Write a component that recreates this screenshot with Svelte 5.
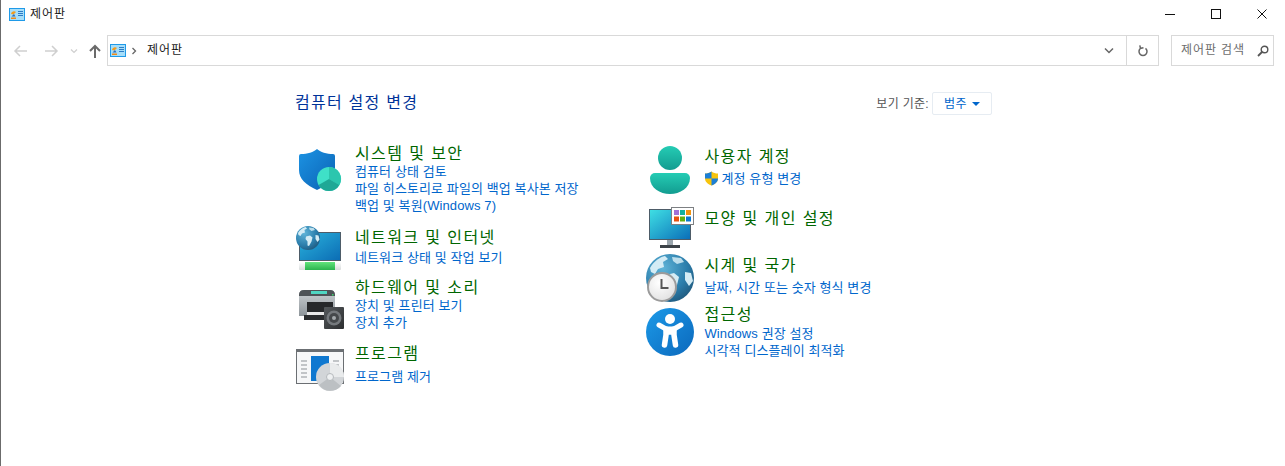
<script>
  const left = [
    { icon: 'shield', title: '시스템 및 보안', h: 84, iconTop: 4, linkGap: 0, links: ['컴퓨터 상태 검토', '파일 히스토리로 파일의 백업 복사본 저장', '백업 및 복원(Windows 7)'] },
    { icon: 'network', title: '네트워크 및 인터넷', h: 50, iconTop: -2, linkGap: 2, links: ['네트워크 상태 및 작업 보기'] },
    { icon: 'printer', title: '하드웨어 및 소리', h: 66, iconTop: 8, linkGap: 0, links: ['장치 및 프린터 보기', '장치 추가'] },
    { icon: 'program', title: '프로그램', h: 60, iconTop: 3, linkGap: 5, links: ['프로그램 제거'] }
  ];
  const right = [
    { icon: 'person', title: '사용자 계정', h: 62, iconTop: 0, linkGap: 4, shield: true, links: ['계정 유형 변경'] },
    { icon: 'theme', title: '모양 및 개인 설정', h: 47, iconTop: -4, linkGap: 0, links: [] },
    { icon: 'clock', title: '시계 및 국가', h: 49, iconTop: -1, linkGap: 4, links: ['날짜, 시간 또는 숫자 형식 변경'] },
    { icon: 'access', title: '접근성', h: 60, iconTop: 4, linkGap: 1, links: ['Windows 권장 설정', '시각적 디스플레이 최적화'] }
  ];
  const columns = [
    { name: 'left', items: left },
    { name: 'right', items: right }
  ];
</script>

{#snippet cpIcon()}
  <svg class="cp" width="16" height="13" viewBox="0 0 16 13">
    <rect x="0.5" y="0.5" width="15" height="12" fill="#a6def9" stroke="#1f9ae8" />
    <path d="M2 6a3 3 0 0 1 5-2L4.500 6.500z" fill="#f29b1d" />
    <path d="M2.500 8.500l2.500-2.500 1.500 2.500z" fill="#2a6fc0" />
    <path d="M9 3.500h5M9 5.500h5M9 7.500h5" stroke="#2d7cc6" />
    <rect x="2" y="9.500" width="5" height="1.500" fill="#ef8a17" />
  </svg>
{/snippet}

{#snippet globeArt(cx, cy, r, id)}
  <defs>
    <radialGradient {id} cx="0.35" cy="0.3" r="0.85">
      <stop offset="0" stop-color="#5fb4d8" />
      <stop offset="0.6" stop-color="#2b7dab" />
      <stop offset="1" stop-color="#1d4f70" />
    </radialGradient>
  </defs>
  <circle {cx} {cy} {r} fill="url(#{id})" />
  <g fill="#d4ecf5" transform="translate({cx} {cy}) scale({r / 24})">
    <path d="M-20-10c4-7 10-11 15-12l3 3-5 3 1 5-6 2-3 5-4-2z" />
    <path d="M2-21l9 1 3 4-7 2-4-3z" opacity="0.85" />
    <path d="M-4-3l8-2 5 4-2 8-5 9-3-1 0-8-4-5z" />
    <path d="M15-6l6 1 2 8-4 5-4-6z" />
  </g>
{/snippet}

{#snippet icon(name)}
  <svg class="ic" width="48" height="48" viewBox="0 0 48 48">
    {#if name === 'shield'}
      <defs>
        <linearGradient id="sh" x1="0" y1="0" x2="1" y2="1"><stop offset="0" stop-color="#1c93e3" /><stop offset="1" stop-color="#0b62b4" /></linearGradient>
      </defs>
      <path d="M21 2c3 3 10 5 16 5q2 0 2 2v14c0 9-7 15-18 20C10 38 3 32 3 23V9q0-2 2-2c6 0 13-2 16-5z" fill="url(#sh)" />
      <circle cx="33" cy="32" r="12" fill="#3fe0c8" />
      <path d="M33 32V20a12 12 0 0 1 10.400 18z" fill="#2cc6ae" />
      <path d="M33 32l10.400 6a12 12 0 0 1-20.800 0z" fill="#1fa896" />
    {:else if name === 'network'}
      <defs>
        <linearGradient id="ns" x1="0" y1="0" x2="1" y2="1"><stop offset="0" stop-color="#2bb4dd" /><stop offset="1" stop-color="#0b6cb4" /></linearGradient>
        <linearGradient id="ng" x1="0" y1="0" x2="0" y2="1"><stop offset="0" stop-color="#62e47c" /><stop offset="1" stop-color="#2ab44e" /></linearGradient>
        <linearGradient id="nw" x1="0" y1="0" x2="0" y2="1"><stop offset="0" stop-color="#ffffff" /><stop offset="1" stop-color="#d8dcdc" /></linearGradient>
      </defs>
      <rect x="3.500" y="7.500" width="41" height="28" fill="url(#ns)" stroke="#4d5c68" />
      <rect x="3" y="37" width="42" height="8" rx="1" fill="url(#nw)" />
      <rect x="9" y="37" width="30" height="8" fill="url(#ng)" />
      {@render globeArt(12, 13, 12, 'gn')}
    {:else if name === 'printer'}
      <defs>
        <linearGradient id="pb" x1="0" y1="0" x2="0" y2="1"><stop offset="0" stop-color="#cdd2d5" /><stop offset="1" stop-color="#8d9499" /></linearGradient>
        <linearGradient id="pk" x1="0" y1="0" x2="1" y2="1"><stop offset="0" stop-color="#55595c" /><stop offset="1" stop-color="#2c2e30" /></linearGradient>
      </defs>
      <path d="M3 10q0-5 5-5h26q5 0 5 5v21H3z" fill="url(#pb)" />
      <path d="M3 10q0-5 5-5h26q5 0 5 5v1H3z" fill="#4e5357" />
      <rect x="15" y="6" width="16" height="3" fill="#4fd6c2" />
      <rect x="36" y="9" width="1.500" height="1.500" fill="#39d36a" />
      <rect x="11" y="17" width="26" height="10" fill="#26282a" />
      <rect x="11" y="27" width="26" height="5" fill="#e8e8e8" />
      <rect x="8" y="30" width="28" height="5" fill="#2a2c2e" />
      <rect x="28" y="22" width="20" height="22" rx="1" fill="url(#pk)" />
      <circle cx="38" cy="33" r="7.500" fill="#75797d" />
      <circle cx="38" cy="33" r="5" fill="#45484b" />
      <circle cx="38" cy="33" r="2" fill="#a3a8ac" />
    {:else if name === 'program'}
      <rect x="0.500" y="3.500" width="47" height="34" fill="#f6f7f8" stroke="#6b6f73" />
      <rect x="0" y="3" width="48" height="3" fill="#6b6f73" />
      <path d="M5 15h6M5 19h6M5 23h6M5 27h6M5 31h6M37 15h6M37 19h6" stroke="#8d9297" />
      <rect x="15" y="10" width="18" height="25" fill="#0f78d0" />
      <circle cx="34" cy="31" r="14" fill="#d2d5d8" />
      <path d="M34 17a14 14 0 0 1 14 14H34z" fill="#e9ebec" />
      <path d="M34 31l-11 8a14 14 0 0 0 22 1z" fill="#bcc0c3" />
      <circle cx="34" cy="31" r="3.500" fill="#eef0f1" stroke="#b5b9bc" />
    {:else if name === 'person'}
      <defs>
        <linearGradient id="pa" x1="0" y1="0" x2="0" y2="1"><stop offset="0" stop-color="#25ccb4" /><stop offset="1" stop-color="#129c90" /></linearGradient>
      </defs>
      <circle cx="24" cy="12" r="12" fill="url(#pa)" />
      <path d="M9 27h30a5 5 0 0 1 5 5c0 10-10 16-20 16S4 42 4 32a5 5 0 0 1 5-5z" fill="url(#pa)" />
    {:else if name === 'theme'}
      <defs>
        <linearGradient id="ts" x1="0" y1="0" x2="1" y2="1"><stop offset="0" stop-color="#3fe0e4" /><stop offset="1" stop-color="#0a6db8" /></linearGradient>
      </defs>
      <rect x="3.500" y="5.500" width="41" height="30" fill="url(#ts)" stroke="#4d5c68" />
      <rect x="21" y="36" width="6" height="5" fill="#9aa5ad" />
      <rect x="14" y="41" width="20" height="3" fill="#3c4248" />
      <rect x="25.500" y="3.500" width="22" height="17" fill="#fff" stroke="#7d8083" />
      <rect x="28" y="6" width="5" height="5" fill="#a070d8" />
      <rect x="34" y="6" width="5" height="5" fill="#12b0a0" />
      <rect x="40" y="6" width="5" height="5" fill="#f2930e" />
      <rect x="28" y="12.500" width="5" height="5" fill="#e8500f" />
      <rect x="34" y="12.500" width="5" height="5" fill="#62b012" />
      <rect x="40" y="12.500" width="5" height="5" fill="#0a78d0" />
    {:else if name === 'clock'}
      {@render globeArt(24, 24, 24, 'gc')}
      <defs>
        <radialGradient id="cf" cx="0.4" cy="0.35" r="0.8"><stop offset="0" stop-color="#ffffff" /><stop offset="1" stop-color="#dcdcdc" /></radialGradient>
      </defs>
      <circle cx="16" cy="33" r="14" fill="url(#cf)" stroke="#9b9b9b" stroke-width="2" />
      <path d="M15.500 25v9h7" fill="none" stroke="#555" stroke-width="2" />
    {:else if name === 'access'}
      <defs>
        <linearGradient id="ac" x1="0" y1="0" x2="1" y2="1"><stop offset="0" stop-color="#1c9ae8" /><stop offset="1" stop-color="#0b68bc" /></linearGradient>
      </defs>
      <circle cx="24" cy="24" r="24" fill="url(#ac)" />
      <circle cx="24" cy="11" r="5" fill="#fff" />
      <path d="M13 17l7 4h8l7-4" fill="none" stroke="#fff" stroke-width="5" stroke-linecap="round" stroke-linejoin="round" />
      <path d="M20 21v6l-1.500 10M28 21v6l1.500 10M20 24h8" fill="none" stroke="#fff" stroke-width="5.500" stroke-linecap="round" stroke-linejoin="round" />
    {/if}
  </svg>
{/snippet}

<div class="window">
  <header class="titlebar">
    <div class="title">
      {@render cpIcon()}
      <span>제어판</span>
    </div>
    <div class="controls">
      <svg width="46" height="32" viewBox="0 0 46 32"><path d="M18 14.500h10" stroke="#111" /></svg>
      <svg width="46" height="32" viewBox="0 0 46 32"><rect x="18.500" y="9.500" width="9" height="9" fill="none" stroke="#111" /></svg>
      <svg width="46" height="32" viewBox="0 0 46 32"><path d="M18.500 9.500l9 9M27.500 9.500l-9 9" stroke="#111" /></svg>
    </div>
  </header>

  <nav class="navbar">
    <div class="navbtns">
      <svg width="16" height="14" viewBox="0 0 16 14"><path d="M14 7H2M7 2L2 7l5 5" fill="none" stroke="#cfcfcf" stroke-width="1.500" /></svg>
      <svg width="16" height="14" viewBox="0 0 16 14"><path d="M2 7h12M9 2l5 5-5 5" fill="none" stroke="#cfcfcf" stroke-width="1.500" /></svg>
      <svg class="chev" width="8" height="6" viewBox="0 0 8 6"><path d="M1 1.500l3 3 3-3" fill="none" stroke="#cfcfcf" stroke-width="1.200" /></svg>
      <svg width="14" height="14" viewBox="0 0 14 14"><path d="M7 14V2M2 7l5-5 5 5" fill="none" stroke="#6a6a6a" stroke-width="2" /></svg>
    </div>
    <div class="address">
      <div class="crumbs">
        {@render cpIcon()}
        <svg width="6" height="8" viewBox="0 0 6 8"><path d="M1.500 1l3 3-3 3" fill="none" stroke="#666" stroke-width="1.300" /></svg>
        <span>제어판</span>
      </div>
      <div class="drop">
        <svg width="10" height="7" viewBox="0 0 10 7"><path d="M1 1.500l4 4 4-4" fill="none" stroke="#666" stroke-width="1.500" /></svg>
      </div>
      <div class="refresh">
        <svg width="12" height="13" viewBox="0 0 12 13"><path d="M3.500 4.300A4 4 0 1 0 8.500 4.300M2.800 1.300l.7 3 3-.6" fill="none" stroke="#666" stroke-width="1.500" /></svg>
      </div>
    </div>
    <div class="search">
      <span>제어판 검색</span>
      <svg width="12" height="12" viewBox="0 0 12 12"><circle cx="7.500" cy="4.500" r="3.300" fill="none" stroke="#555" stroke-width="1.400" /><path d="M5 7l-4 4" stroke="#555" stroke-width="1.800" /></svg>
    </div>
  </nav>

  <main class="content">
    <div class="head">
      <h1>컴퓨터 설정 변경</h1>
      <div class="viewby">
        <span>보기 기준:</span>
        <button>범주<i></i></button>
      </div>
    </div>
    <div class="cols">
      {#each columns as col}
        <section class="col {col.name}">
          {#each col.items as item}
            <article class="item" style:height="{item.h}px">
              <div class="iconbox" style:margin-top="{item.iconTop}px">{@render icon(item.icon)}</div>
              <div class="text">
                <h2>{item.title}</h2>
                <div class="links" style:margin-top="{item.linkGap}px">
                  {#each item.links as link}
                    <a href="#top" class:withshield={item.shield}>
                      {#if item.shield}
                        <svg width="15" height="15" viewBox="0 0 15 15">
                          <path d="M7.500 0.500c2 1.500 4 2 6.500 2v5c0 3-2.500 5.500-6.500 7C3.500 13 1 10.500 1 7.500v-5c2.500 0 4.500-.5 6.500-2z" fill="#f7c40d" />
                          <path d="M7.500 0.500c-2 1.500-4 2-6.500 2v5h6.500zM7.500 7.500H14c0 3-2.500 5.500-6.500 7z" fill="#1c7fd6" />
                        </svg>
                      {/if}
                      {link}
                    </a>
                  {/each}
                </div>
              </div>
            </article>
          {/each}
        </section>
      {/each}
    </div>
  </main>
</div>

<style>
  :global(body) {
    margin: 0;
    background: #fff;
    overflow: hidden;
  }
  .window {
    height: 466px;
    box-sizing: border-box;
    border-left: 1px solid #6b6b6b;
    font-family: "Liberation Sans", "Noto Sans CJK KR", sans-serif;
    color: #1a1a1a;
    font-size: 12px;
    letter-spacing: 0.9px;
  }
  .titlebar {
    display: flex;
    justify-content: space-between;
    height: 32px;
  }
  .title {
    display: flex;
    align-items: center;
    gap: 5px;
    padding: 0 0 4px 8px;
  }
  .title span {
    padding-bottom: 3px;
  }
  .controls {
    display: flex;
  }
  .cp {
    display: block;
  }
  .navbar {
    display: flex;
    height: 31px;
    margin-top: 3px;
  }
  .navbtns {
    width: 106px;
    display: flex;
    align-items: center;
    gap: 14px;
    padding-left: 12px;
    box-sizing: border-box;
  }
  .chev {
    margin: 0 -4px 0 -3px;
  }
  .address {
    width: 1052px;
    display: flex;
    box-sizing: border-box;
    border: 1px solid #d9d9d9;
  }
  .crumbs {
    flex: 1;
    display: flex;
    align-items: center;
    padding-left: 2px;
    gap: 5px;
  }
  .crumbs span {
    margin-left: 5px;
    padding-bottom: 5px;
  }
  .drop {
    width: 35px;
    display: flex;
    align-items: center;
    justify-content: center;
  }
  .refresh {
    width: 32px;
    box-sizing: border-box;
    display: flex;
    align-items: center;
    justify-content: center;
    border-left: 1px solid #d9d9d9;
  }
  .search {
    width: 103px;
    margin-left: 12px;
    box-sizing: border-box;
    border: 1px solid #d9d9d9;
    display: flex;
    align-items: center;
    justify-content: space-between;
    padding: 0 4px 0 9px;
    color: #6d6d6d;
  }
  .search span {
    padding-bottom: 5px;
  }
  .content {
    padding-left: 294px;
    width: 697px;
  }
  .head {
    display: flex;
    justify-content: space-between;
    margin-top: 26px;
    height: 23px;
    align-items: center;
  }
  h1 {
    font-size: 16px;
    line-height: 20px;
    font-weight: 400;
    color: #003399;
    margin: 0 0 2px;
    letter-spacing: 1.25px;
  }
  .viewby {
    display: flex;
    align-items: center;
    gap: 3px;
    color: #555;
    letter-spacing: 0.3px;
  }
  .viewby span {
    padding-bottom: 2px;
  }
  button {
    width: 60px;
    height: 23px;
    box-sizing: border-box;
    background: #fff;
    border: 1px solid #e6ecf2;
    border-radius: 2px;
    color: #0066cc;
    font: inherit;
    letter-spacing: 0.45px;
    padding: 0 0 2px 11px;
    display: flex;
    align-items: center;
    gap: 5px;
  }
  button i {
    width: 0;
    height: 0;
    margin-top: 2px;
    border: 4px solid transparent;
    border-top: 4px solid #0066cc;
    border-bottom: 0;
  }
  .cols {
    display: flex;
  }
  .col {
    width: 350px;
    padding-top: 31px;
  }
  .col.left {
    width: 352px;
    padding-top: 28px;
  }
  .item {
    display: flex;
    gap: 11px;
  }
  .iconbox {
    width: 48px;
    height: 48px;
    flex: none;
    margin-left: 1px;
  }
  .ic {
    display: block;
    overflow: visible;
  }
  h2 {
    font-size: 16px;
    line-height: 20px;
    font-weight: 400;
    color: #006600;
    margin: 1px 0 -1px;
    letter-spacing: 1.4px;
  }
  .links {
    display: flex;
    flex-direction: column;
  }
  a {
    display: block;
    font-size: 13px;
    line-height: 17px;
    color: #0066cc;
    text-decoration: none;
    white-space: nowrap;
    letter-spacing: 0.1px;
  }
  a.withshield {
    display: flex;
    align-items: center;
    gap: 3px;
    margin-left: -1px;
  }
</style>
